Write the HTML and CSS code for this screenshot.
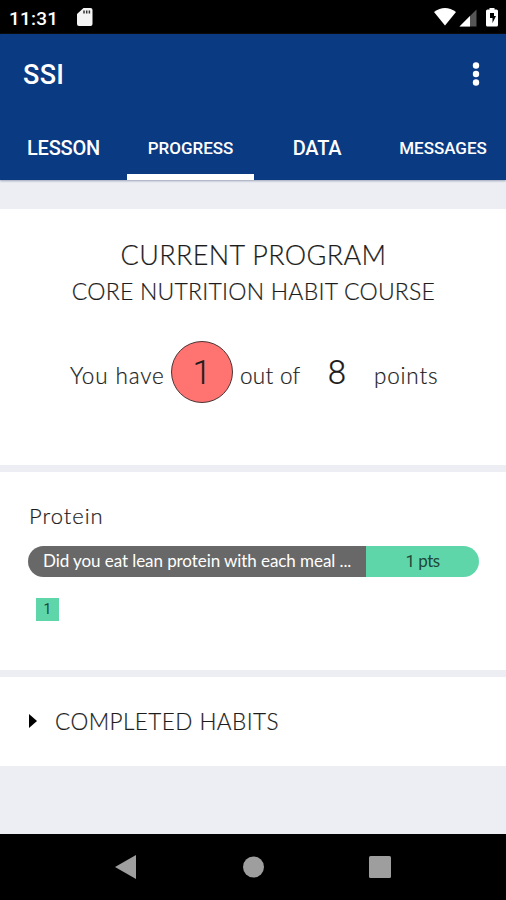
FILE: index.html
```html
<!DOCTYPE html>
<html lang="en">
<head>
<meta charset="utf-8">
<title>SSI</title>
<link rel="stylesheet" href="styles.css">
</head>
<body>
<div class="status">
  <span class="clock">11:31</span>
  <svg class="sd" width="16" height="18" viewBox="0 0 16 18"><path fill="#f4f4f4" d="M6.500 0H13.500q2 0 2 2v14q0 2-2 2H2q-2 0-2-2V6z"/><path stroke="#333" stroke-width="1.500" d="M7 2.500v3M9.700 2.500v3M12.400 2.500v3"/></svg>
  <svg class="signals" width="66" height="20" viewBox="433 7 66 20"><path fill="#fff" d="M434 12q11-8 22 0l-11 13.500z"/><path fill="#555" d="M476.500 9.500v17h-17z"/><path fill="#fff" d="M470 16v10.500h-10.500z"/><path fill="#fff" d="M489.500 8h5v1.500h2q1.500 0 1.500 1.500v14q0 1.500-1.500 1.500h-9q-1.500 0-1.500-1.500V11q0-1.500 1.500-1.500h2z"/><path d="M490 13h4v3h2l-3.500 7v-5H490z"/></svg>
</div>
<header class="bar">
  <div class="title">
    <span class="brand">SSI</span>
    <svg width="8" height="24" viewBox="0 0 8 24"><g fill="#fff"><circle cx="4" cy="3.500" r="3.200"/><circle cx="4" cy="12" r="3.200"/><circle cx="4" cy="20.500" r="3.200"/></g></svg>
  </div>
  <nav class="tabs">
    <span class="tab big">LESSON</span>
    <span class="tab active">PROGRESS</span>
    <span class="tab big">DATA</span>
    <span class="tab">MESSAGES</span>
  </nav>
</header>
<main>
  <section class="card summary">
    <h1>CURRENT PROGRAM</h1>
    <h2>CORE NUTRITION HABIT COURSE</h2>
    <div class="tally">
      <span class="have">You have</span>
      <span class="num score">1</span>
      <span class="outof">out of</span>
      <span class="num total">8</span>
      <span class="unit">points</span>
    </div>
  </section>
  <section class="card habit">
    <h3>Protein</h3>
    <div class="pill"><span class="question">Did you eat lean protein with each meal ...</span><span class="points"><span class="digit">1</span> pts</span></div>
    <span class="day">1</span>
  </section>
  <section class="card completed">
    <svg width="8" height="14" viewBox="0 0 8 14"><path d="M0 0l8 7-8 7z"/></svg>
    <span>COMPLETED HABITS</span>
  </section>
</main>
<footer class="navbar">
  <svg width="21" height="24" viewBox="0 0 21 24"><path fill="#9e9e9e" d="M0 12L21 0v24z"/></svg>
  <svg width="22" height="22" viewBox="0 0 22 22"><circle fill="#9e9e9e" cx="11.500" cy="11" r="10.500"/></svg>
  <svg width="22" height="22" viewBox="0 0 22 22"><rect fill="#9e9e9e" width="22" height="22" rx="1.500"/></svg>
</footer>
</body>
</html>
```
FILE: styles.css
```css
* { box-sizing: border-box; }
body { margin: 0; width: 506px; height: 900px; display: flex; flex-direction: column; background: #eceef4; font-family: Lato, sans-serif; font-weight: 300; color: #1c1c1c; overflow: hidden; white-space: nowrap; }
svg { display: block; flex: none; }
h1, h2, h3 { margin: 0; font-weight: 300; }
h1, h2, h3, .tally, .completed span { -webkit-text-stroke: .2px; }

.status { height: 34px; padding: 0 7px 0 9px; background: #000; display: flex; align-items: center; color: #fff; font-family: Roboto, sans-serif; font-weight: 500; font-size: 19px; }
.clock { width: 68px; padding-top: 2px; letter-spacing: .2px; }
.signals { margin-left: auto; }

.bar { height: 146px; background: #0a3a82; box-shadow: 0 1px 2px #9aa1b5; color: #fff; font-family: Roboto, sans-serif; font-weight: 500; }
.title { height: 80px; padding: 0 26px 0 23px; display: flex; align-items: center; justify-content: space-between; }
.brand { font-size: 27px; padding-top: 2px; letter-spacing: .3px; }
.tabs { height: 66px; display: grid; grid-template-columns: 127px 127px 126px 126px; }
.tab { display: flex; align-items: center; justify-content: center; border-bottom: 6px solid transparent; padding-top: 7px; font-size: 17px; letter-spacing: 0; }
.big { font-size: 20px; letter-spacing: -.2px; }
.active { border-bottom-color: #fff; }

main { flex: 1; padding-top: 29px; display: flex; flex-direction: column; gap: 7px; }
.card { background: #fff; }
.summary { height: 256px; padding-top: 28px; text-align: center; }
h1 { font-size: 27px; line-height: 36px; letter-spacing: .35px; padding-left: 1px; }
h2 { font-size: 23px; line-height: 36px; letter-spacing: .23px; padding-left: 1px; }
.tally { display: flex; align-items: center; height: 62px; margin-top: 32px; padding-left: 70px; font-size: 22.5px; text-align: left; }
.have, .outof, .unit { padding-top: 6px; }
.have { width: 101px; letter-spacing: .85px; }
.num { font-family: Roboto, sans-serif; font-weight: 300; font-size: 33px; text-align: center; }
.score { width: 62px; height: 62px; line-height: 61px; border-radius: 50%; background: #ff7371; border: 1px solid #4b3435; }
.outof { width: 68px; padding-left: 7px; letter-spacing: .3px; }
.total { width: 72px; }
.unit { padding-left: 1px; letter-spacing: .8px; }

.habit { height: 198px; padding: 29px 27px 0 28px; }
h3 { font-size: 22px; line-height: 30px; padding-left: 1px; letter-spacing: 1px; }
.pill { height: 31px; margin-top: 15px; display: flex; border-radius: 16px; overflow: hidden; font-weight: 400; font-size: 17px; line-height: 30px; }
.question { width: 338px; padding-left: 15px; background: #686868; color: #fff; letter-spacing: -.07px; }
.points { flex: 1; background: #5fd6aa; color: #20483a; text-align: center; letter-spacing: -.6px; }
.digit, .day { font-family: Roboto, sans-serif; }
.day { display: block; width: 23px; height: 23px; margin: 21px 0 0 8px; background: #5fd6aa; color: #20483a; text-align: center; font-size: 14px; line-height: 22px; font-weight: 400; }

.completed { height: 89px; padding-left: 29px; display: flex; align-items: center; gap: 18px; font-size: 22.5px; }
.completed span { letter-spacing: .45px; }
.completed svg { margin-top: -1px; }

.navbar { height: 66px; padding: 0 115px; background: #000; display: flex; align-items: center; justify-content: space-between; }
```
